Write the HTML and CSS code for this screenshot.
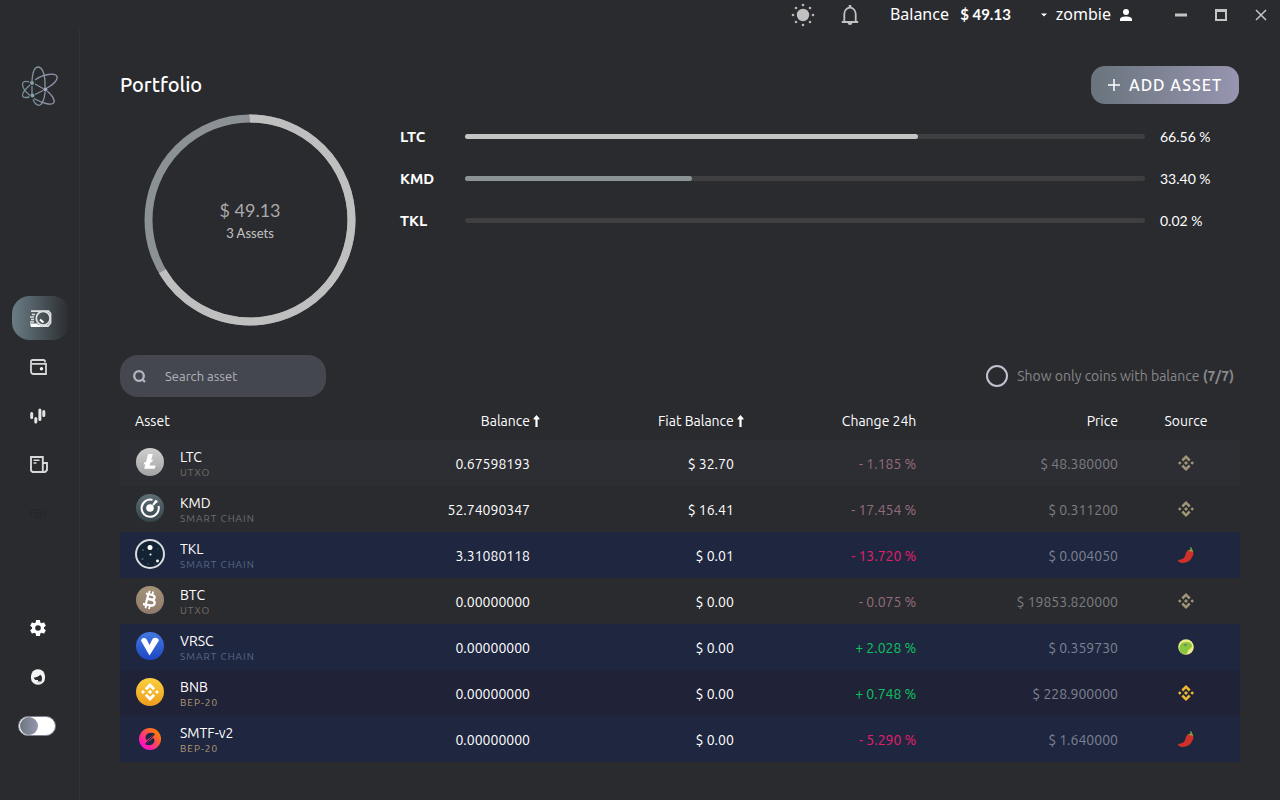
FILE: index.html
```html
<!DOCTYPE html>
<html lang="en">
<head>
<meta charset="utf-8">
<title>Portfolio</title>
<link rel="stylesheet" href="styles.css">
</head>
<body>
<svg class="defs" aria-hidden="true">
  <defs>
    <linearGradient id="g-logo" x1="0" x2="1"><stop offset="0" stop-color="#6f8d92"/><stop offset="1" stop-color="#9694b0"/></linearGradient>
    <linearGradient id="g-ltc" x1="0" x2="0" y1="0" y2="1"><stop offset="0" stop-color="#cfcfcf"/><stop offset="1" stop-color="#a3a3a3"/></linearGradient>
    <linearGradient id="g-kmd" x1="0" x2="0" y1="0" y2="1"><stop offset="0" stop-color="#5f6e74"/><stop offset="1" stop-color="#36454a"/></linearGradient>
    <linearGradient id="g-btc" x1="0" x2="0" y1="0" y2="1"><stop offset="0" stop-color="#a49378"/><stop offset="1" stop-color="#8f7a6c"/></linearGradient>
    <linearGradient id="g-vrsc" x1="0" x2="0" y1="0" y2="1"><stop offset="0" stop-color="#4379e0"/><stop offset="1" stop-color="#1f47c4"/></linearGradient>
    <linearGradient id="g-bnb" x1="0" x2="0" y1="0" y2="1"><stop offset="0" stop-color="#fbd03f"/><stop offset="1" stop-color="#ee9c1c"/></linearGradient>
    <linearGradient id="g-smtf" x1="0" x2="1" y1="1" y2="0"><stop offset="0.1" stop-color="#ff00e0"/><stop offset="0.5" stop-color="#ff4262"/><stop offset="0.85" stop-color="#ff8100"/></linearGradient>
    <symbol id="binance" viewBox="0 0 16 16">
      <path d="M8 0l4.600 4.600-1.800 1.800L8 3.600 5.200 6.400 3.400 4.600zM8 16l4.600-4.600-1.800-1.800L8 12.400 5.200 9.600 3.400 11.400zM8 6l2 2-2 2-2-2zM1.800 6.200L3.600 8 1.800 9.800 0 8zM14.200 6.200L16 8l-1.800 1.800L12.400 8z" fill="currentColor"/>
    </symbol>
    <symbol id="pepper" viewBox="0 0 16 16">
      <path d="M9.200 3.800C10.700 2.200 14 2.400 15 4c1 1.800.4 4.700-1.500 7.200-2 2.900-4.900 4.600-8.200 4.800C2.400 16.100.4 15 .1 14c-.2-.9.8-1.200 2-1.400 2.300-.4 4-1.300 4.900-3.300.8-1.700.7-4 2.200-5.500z" fill="#cf302a"/>
      <path d="M10.300 4.300c.5-1.500 2-1.900 2.300-1.900.2-.8 0-1.300-.8-1.700l.7-.6c1.200.4 1.600 1.400 1.400 2.400.8.4 1.300 1.100 1.200 2.500-.8-1-1.600-1-2.200-.2-.7-.8-1.700-1-2.600-.5z" fill="#7ca93f"/>
    </symbol>
    <symbol id="sort" viewBox="0 0 7 12"><path d="M3.500 0L6.500 3.500v1H4.600V12H2.400V4.500H.5v-1z" fill="currentColor"/></symbol>
  </defs>
</svg>

<div class="app">
  <header class="topbar">
    <button class="icon-btn" aria-label="Theme">
      <svg width="24" height="24" viewBox="0 0 24 24"><circle cx="12" cy="12" r="6.200" fill="#c1c1c1"/><g fill="#b5b5b5"><circle cx="12" cy="2" r="1.300"/><circle cx="12" cy="22" r="1.300"/><circle cx="2" cy="12" r="1.300"/><circle cx="22" cy="12" r="1.300"/><circle cx="5" cy="5" r="1.300"/><circle cx="19" cy="5" r="1.300"/><circle cx="5" cy="19" r="1.300"/><circle cx="19" cy="19" r="1.300"/></g></svg>
    </button>
    <button class="icon-btn" aria-label="Notifications">
      <svg width="18" height="20" viewBox="0 0 18 20"><path d="M3.300 16V9a5.700 6.400 0 0 1 11.400 0v7M.8 17h16.400" fill="none" stroke="#c1c1c1" stroke-width="1.800"/><path d="M7.700 0h2.600v3H7.700zM6.700 18h4.600a2.300 2 0 0 1-4.600 0z" fill="#c1c1c1"/></svg>
    </button>
    <div class="top-balance">Balance <strong>$ 49.13</strong></div>
    <button class="user">
      <svg width="6" height="4" viewBox="0 0 6 4"><path d="M0 .5h6L3 3.500z" fill="#fff"/></svg>
      <span>zombie</span>
      <svg width="12" height="12" viewBox="0 0 12 12"><circle cx="6" cy="3" r="3" fill="#fff"/><path d="M0 12v-1.500C0 8.300 3 7.500 6 7.500s6 .8 6 3V12z" fill="#fff"/></svg>
    </button>
    <div class="window-controls">
      <button aria-label="Minimize"><svg width="12" height="12"><path d="M0 4.500h12v3H0z" fill="#c4c4c4"/></svg></button>
      <button aria-label="Maximize"><svg width="12" height="12"><path d="M1 2h10M1 1v10h10V1z" fill="none" stroke="#c4c4c4" stroke-width="2"/></svg></button>
      <button aria-label="Close"><svg width="12" height="12"><path d="M1 1l10 10M11 1L1 11" stroke="#c4c4c4" stroke-width="1.500"/></svg></button>
    </div>
  </header>

  <aside class="sidebar">
    <svg class="logo" width="38" height="42" viewBox="0 0 38 42" fill="none" stroke="url(#g-logo)" stroke-width="1.300">
      <path d="M11 16C11.500 7 14 2 17.200 2s6 5 6.600 12c.2 3 .3 5 .2 8M14 15C22 9 34 7.500 36 11.500c1.200 4-5 9-10 11.500M26 26c4 3 8 8 7 11.500-2 4-13 0-20-4M12 34.500C14 39 16 40.300 18 40.300c3 0 5.500-6 6.200-14M8.500 17C4 15.500 1.500 17 1.500 19c0 4 3 8 7.500 11.500M9 20c-4 3.500-7.500 7-7.500 10.500 0 2 3 2.500 7 1.500M11 21v8M14 19l8 4.500M14 29.500l8-4"/>
      <g fill="#86a2a8" stroke="none"><circle cx="11" cy="18" r="2"/><circle cx="11.500" cy="30.500" r="2"/><circle cx="24.300" cy="24.300" r="2" fill="#a9abc1"/></g>
    </svg>
    <nav class="nav">
      <a class="nav-item active" href="#portfolio" aria-label="Portfolio"><svg width="22" height="17" viewBox="0 0 22 17"><g fill="none" stroke="#dcdfe0" stroke-width="1.800"><circle cx="13.200" cy="8.300" r="6.900"/><path d="M1 1.200h17.500l2 2.300v9.500l-2.500 3H1"/><path d="M2 4.500h3M0 7h4M1 9.500h3M0 12h4" stroke-width="1.300"/></g><path d="M10 9.500l3.500 3" stroke="#fff" stroke-width="2.200"/><path d="M0 13.500h7l3 2.500v1H1z" fill="#fff"/></svg></a>
      <a class="nav-item" href="#wallet" aria-label="Wallet"><svg width="17" height="16" viewBox="0 0 17 16"><path d="M15 3.500v-1A1.500 1.500 0 0 0 13.500 1h-11A1.500 1.500 0 0 0 1 2.500v10A2.500 2.500 0 0 0 3.500 15H16V4.800H2" fill="none" stroke="#d6d8d9" stroke-width="1.800"/><circle cx="11.500" cy="9.700" r="1.700" fill="#f4f4f4"/></svg></a>
      <a class="nav-item" href="#dex" aria-label="DEX"><svg width="16" height="16" viewBox="0 0 16 16"><g stroke="#e2e4e5" stroke-width="3" stroke-linecap="round"><path d="M1.700 5.500v4M5.800 10.500v3.500M9.900 2v9.500M13.800 3.500v4"/></g></svg></a>
      <a class="nav-item" href="#addresses" aria-label="Address book"><svg width="18" height="17" viewBox="0 0 18 17"><path d="M12.800 16V1H1v13.500L2.500 16H15l2-2V7h-4" fill="none" stroke="#d6d8d9" stroke-width="1.900"/><path d="M3.500 4.200h6M3.500 7h3" stroke="#d6d8d9" stroke-width="1.500"/></svg></a>
      <a class="nav-item" href="#fiat" aria-label="Fiat"><svg width="16" height="9" viewBox="0 0 16 9"><path d="M1 1v7M15 1v7M4 1h8M4 8h8M3 3q5 3 10 0M3 6q5-3 10 0" fill="none" stroke="#242527"/></svg></a>
    </nav>
    <div class="nav nav-bottom">
      <a class="nav-item" href="#settings" aria-label="Settings"><svg width="16" height="16" viewBox="2 2 20 20"><path fill="#fff" d="M19.430 12.980c.04-.32.070-.64.070-.98s-.03-.66-.07-.98l2.110-1.650c.19-.15.240-.42.120-.64l-2-3.460c-.12-.22-.39-.3-.61-.22l-2.490 1c-.52-.4-1.080-.73-1.690-.98l-.38-2.650A.49.490 0 0 0 14 2h-4c-.25 0-.46.180-.49.420l-.38 2.650c-.61.250-1.170.590-1.690.980l-2.490-1c-.23-.09-.49 0-.61.220l-2 3.460c-.13.220-.07.490.12.640l2.110 1.650c-.04.320-.07.650-.07.980s.03.660.07.980l-2.110 1.650c-.19.150-.24.420-.12.640l2 3.460c.12.220.39.300.61.220l2.490-1c.52.400 1.080.730 1.690.980l.38 2.650c.03.240.24.420.49.420h4c.25 0 .46-.18.490-.42l.38-2.650c.61-.25 1.170-.59 1.690-.98l2.490 1c.23.090.49 0 .61-.22l2-3.460c.12-.22.070-.49-.12-.64zM12 15.500a3.500 3.500 0 1 1 0-7 3.500 3.500 0 0 1 0 7z"/></svg></a>
      <a class="nav-item" href="#support" aria-label="Support"><svg width="16" height="16" viewBox="0 0 16 16"><rect x="1" y="0.300" width="14" height="15.400" rx="6.800" fill="#f4f4f4"/><path d="M4 8.500c2.500-.2 4.500-1 6.500-2.700.8 1.200 1.300 1.700 1.500 2.700 0 1.500-.1 2.500-.5 3.500H8v-1H5.500C4.500 10.500 4 9.700 4 8.500z" fill="#2a2b2f"/><path d="M8 12h4l-1 1.500H7z" fill="#a7a8aa"/></svg></a>
      <label class="nav-item toggle"><input type="checkbox" aria-label="Dark mode"></label>
    </div>
  </aside>

  <main class="main">
    <div class="title-row">
      <h1>Portfolio</h1>
      <button class="add"><svg width="12" height="12"><path d="M6 0v12M0 6h12" stroke="#fff" stroke-width="1.500"/></svg>ADD ASSET</button>
    </div>

    <section class="overview">
      <div class="donut">
        <svg width="212" height="212" viewBox="0 0 212 212" fill="none" stroke-width="8">
          <g transform="rotate(-90 106 106)">
            <circle cx="106" cy="106" r="101.500" stroke="#8b9194"/>
            <circle cx="106" cy="106" r="101.500" stroke="#bfbfbf" pathLength="100" stroke-dasharray="66.560 33.440"/>
          </g>
        </svg>
        <div class="donut-text"><span class="total">$ 49.13</span><span class="count">3 Assets</span></div>
      </div>
      <ul class="shares">
        <li><b>LTC</b><span class="bar"><span class="fill" style="width:66.56%"></span></span><span>66.56 %</span></li>
        <li><b>KMD</b><span class="bar"><span class="fill kmd" style="width:33.4%"></span></span><span>33.40 %</span></li>
        <li><b>TKL</b><span class="bar"><span class="fill" style="width:0"></span></span><span>0.02 %</span></li>
      </ul>
    </section>

    <div class="toolbar">
      <label class="search">
        <svg width="13" height="13" viewBox="0 0 13 13" fill="none" stroke="#b3b6c4" stroke-width="2.300"><circle cx="6" cy="6" r="4.800"/><path d="M9 9l3 3"/></svg>
        <input type="text" placeholder="Search asset" aria-label="Search asset">
      </label>
      <label class="only"><input type="checkbox"><span>Show only coins with balance <b>(7/7)</b></span></label>
    </div>

    <table class="assets">
      <colgroup><col class="c-asset"><col class="c-balance"><col class="c-fiat"><col class="c-change"><col class="c-price"><col class="c-source"></colgroup>
      <thead><tr>
        <th class="asset-head">Asset</th>
        <th class="sorted">Balance<svg width="7" height="12"><use href="#sort"/></svg></th>
        <th class="sorted">Fiat Balance<svg width="7" height="12"><use href="#sort"/></svg></th>
        <th>Change 24h</th><th>Price</th><th class="source">Source</th>
      </tr></thead>
      <tbody>
        <tr class="alt">
          <td class="asset"><div class="coin"><svg width="30" height="30" viewBox="0 0 30 30"><circle cx="15" cy="15" r="14" fill="url(#g-ltc)"/><path d="M13 7h4.800l-1.700 6.200 1.900-.8-.7 2.300-1.900.8-.8 3h6l-.9 3.300H9.200l1.200-4.700-1.700.7.6-2.300 1.800-.7z" fill="#fff"/></svg><div><span class="name">LTC</span><span class="kind warm">UTXO</span></div></div></td>
          <td>0.67598193</td><td>$ 32.70</td><td class="down dim">- 1.185 %</td><td class="price dim">$ 48.380000</td>
          <td class="source"><svg class="muted" width="16" height="16"><use href="#binance"/></svg></td>
        </tr>
        <tr>
          <td class="asset"><div class="coin"><svg width="30" height="30" viewBox="0 0 30 30"><circle cx="15" cy="15" r="14" fill="url(#g-kmd)"/><path d="M17.500 6.900A8.600 8.600 0 1 0 23.500 13M18 12l3-3.500" fill="none" stroke="#fff" stroke-width="2"/><circle cx="15" cy="15" r="3.800" fill="#fff"/><circle cx="21" cy="8.500" r="1.600" fill="#fff"/></svg><div><span class="name">KMD</span><span class="kind">SMART CHAIN</span></div></div></td>
          <td>52.74090347</td><td>$ 16.41</td><td class="down dim">- 17.454 %</td><td class="price dim">$ 0.311200</td>
          <td class="source"><svg class="muted" width="16" height="16"><use href="#binance"/></svg></td>
        </tr>
        <tr class="blue">
          <td class="asset"><div class="coin"><svg width="30" height="30" viewBox="0 0 30 30"><circle cx="15" cy="15" r="14" fill="#142334" stroke="#dadddf" stroke-width="2"/><g fill="#fff"><circle cx="15" cy="8.500" r="2.500"/><circle cx="15.500" cy="15.500" r="1"/><circle cx="22.500" cy="22" r="1.400"/></g><g fill="#4d6878"><circle cx="8" cy="11" r=".9"/><circle cx="7.500" cy="20" r="1"/><circle cx="23" cy="10" r=".6"/><circle cx="13" cy="25" r=".7"/><circle cx="20" cy="25" r=".6"/></g></svg><div><span class="name">TKL</span><span class="kind">SMART CHAIN</span></div></div></td>
          <td>3.31080118</td><td>$ 0.01</td><td class="down">- 13.720 %</td><td class="price">$ 0.004050</td>
          <td class="source"><svg width="16" height="16"><use href="#pepper"/></svg></td>
        </tr>
        <tr>
          <td class="asset"><div class="coin"><svg width="30" height="30" viewBox="0 0 30 30"><circle cx="15" cy="15" r="14" fill="url(#g-btc)"/><g fill="none" stroke="#fff" stroke-width="2.300"><path d="M11 8.500l6 1.500c2 .5 3 1.500 2.600 2.900-.4 1.500-1.800 1.900-3.500 1.500l-3.200-.8M13.300 9.500l-3 11.500M12.500 14l4.500 1c2 .5 3 1.700 2.600 3.500-.5 1.900-2.100 2.300-4.200 1.800L8 19"/><path d="M14.700 5.800l-.8 3M18.200 6.600l-.8 3M11.300 20l-.8 3.200M14.800 20.900l-.8 3.200" stroke-width="1.800"/></g></svg><div><span class="name">BTC</span><span class="kind warm">UTXO</span></div></div></td>
          <td>0.00000000</td><td>$ 0.00</td><td class="down dim">- 0.075 %</td><td class="price dim">$ 19853.820000</td>
          <td class="source"><svg class="muted" width="16" height="16"><use href="#binance"/></svg></td>
        </tr>
        <tr class="blue">
          <td class="asset"><div class="coin"><svg width="30" height="30" viewBox="0 0 30 30"><circle cx="15" cy="15" r="14" fill="url(#g-vrsc)"/><path d="M6.400 8.500C8.500 6 11 7 12 9l2.500 5 2.500-5c1.200-2.500 4-3 6.500-.8.4.5.4 1 .1 1.700L14.500 24.500 6.200 10c-.3-.6-.2-1.100.2-1.500z" fill="#fff"/></svg><div><span class="name">VRSC</span><span class="kind">SMART CHAIN</span></div></div></td>
          <td>0.00000000</td><td>$ 0.00</td><td class="up">+ 2.028 %</td><td class="price">$ 0.359730</td>
          <td class="source"><svg width="16" height="16" viewBox="0 0 16 16"><circle cx="8" cy="8" r="7.800" fill="#eceb88"/><path d="M1.500 11C1 6 3.500 3 8 3c4-.3 6 1.500 6 4-.5 3-3.500 3-4 5s-1 3-3 3.200C4 15 2 13.500 1.500 11z" fill="#8ac63f"/><path d="M5.500 5l3.500.2L8.300 7.300 6.300 6.500z" fill="#70806f"/></svg></td>
        </tr>
        <tr class="violet">
          <td class="asset"><div class="coin"><svg width="30" height="30" viewBox="0 0 30 30"><circle cx="15" cy="15" r="14" fill="url(#g-bnb)"/><svg x="6" y="6" width="18" height="18" color="#fff"><use href="#binance"/></svg></svg><div><span class="name">BNB</span><span class="kind gold">BEP-20</span></div></div></td>
          <td>0.00000000</td><td>$ 0.00</td><td class="up">+ 0.748 %</td><td class="price">$ 228.900000</td>
          <td class="source"><svg class="bright" width="16" height="16"><use href="#binance"/></svg></td>
        </tr>
        <tr class="blue">
          <td class="asset"><div class="coin"><svg width="30" height="30" viewBox="0 0 30 30"><circle cx="15" cy="16" r="11" fill="url(#g-smtf)"/><path d="M19.500 10.500C16 9 11 10 10.500 14c0 1.500.5 2.500 1.300 3.300zM10.500 21.500c3.500 1.500 8.500.5 9-3.500 0-1.500-.5-2.500-1.300-3.300z" fill="#222646"/><path d="M19.500 10.800L10.500 21.200" stroke="#222646" stroke-width="1.200"/></svg><div><span class="name">SMTF-v2</span><span class="kind gold">BEP-20</span></div></div></td>
          <td>0.00000000</td><td>$ 0.00</td><td class="down">- 5.290 %</td><td class="price">$ 1.640000</td>
          <td class="source"><svg width="16" height="16"><use href="#pepper"/></svg></td>
        </tr>
      </tbody>
    </table>
  </main>
</div>
</body>
</html>
```
FILE: styles.css
```css
* { box-sizing: border-box; }
body {
  margin: 0;
  background: #2a2b2f;
  color: #fff;
  font: 14px/20px "Ubuntu", "Noto Sans", sans-serif;
}
button {
  border: 0;
  padding: 0;
  background: none;
  color: inherit;
  font: inherit;
  cursor: pointer;
}
svg { display: block; flex: none; }
.defs { position: absolute; width: 0; height: 0; }

.app {
  display: grid;
  grid-template: 30px 1fr / 80px 1fr;
  min-height: 100vh;
}

/* Title bar */
.topbar {
  grid-column: 1 / -1;
  display: flex;
  align-items: center;
  justify-content: flex-end;
  font-size: 16px;
}
.icon-btn { margin-right: 26px; }
.icon-btn + .icon-btn { margin-right: 31px; }
.top-balance {
  padding-bottom: 2px;
  font-family: "Noto Sans", sans-serif;
}
.top-balance strong {
  margin-left: 7px;
  font-family: Lato, sans-serif;
  font-size: 15px;
}
.user {
  display: flex;
  align-items: center;
  gap: 9px;
  margin: 0 28px 0 30px;
  font-family: "Noto Sans", sans-serif;
}
.user span { padding-bottom: 2px; }
.window-controls { display: flex; }
.window-controls button {
  display: flex;
  align-items: center;
  justify-content: center;
  width: 40px;
  height: 30px;
  padding-left: 2px;
}

/* Sidebar */
.sidebar {
  display: flex;
  flex-direction: column;
  padding: 35px 0 50px;
  border-right: 1px solid #333438;
}
.logo { margin-left: 21px; }
.nav { margin-top: 186px; }
.nav-bottom { margin-top: auto; }
.nav-item {
  display: flex;
  align-items: center;
  height: 49px;
  padding-left: 30px;
}
.nav-item.active {
  height: 44px;
  margin: 3px 9px 2px 12px;
  padding-left: 18px;
  border-radius: 18px;
  background: linear-gradient(90deg, #6a7d85, #2a2b2f);
}
.nav-item.toggle { padding-left: 18px; }
.toggle input {
  appearance: none;
  display: flex;
  align-items: center;
  width: 38px;
  height: 20px;
  margin: 0;
  padding: 1px;
  border: 1px solid #7d8190;
  border-radius: 10px;
  background: #fff;
}
.toggle input::before {
  content: "";
  width: 18px;
  height: 18px;
  border-radius: 50%;
  background: linear-gradient(90deg, #6b7780, #9795b0);
}
.toggle input:checked { justify-content: flex-end; }

/* Main */
.main { padding: 36px 40px; }
.title-row {
  display: flex;
  align-items: center;
  justify-content: space-between;
}
h1 { margin: 0; font-size: 20px; font-weight: 500; }
.add {
  display: flex;
  align-items: center;
  justify-content: center;
  gap: 9px;
  min-width: 148px;
  height: 38px;
  margin-right: 1px;
  padding: 0 16px;
  border-radius: 14px;
  background: linear-gradient(90deg, #69747d, #9795b0);
  font-size: 16px;
  font-weight: 500;
  letter-spacing: 1px;
}
.overview {
  display: grid;
  grid-template-columns: 260px 1fr;
  gap: 20px;
  margin-top: 10px;
}
.donut { display: grid; place-items: center; }
.donut > * { grid-area: 1 / 1; }
.donut-text { text-align: center; font-family: Lato, sans-serif; }
.donut-text span { display: block; }
.total { color: #a9a9a9; font-size: 18px; line-height: 26px; }
.count { color: #c4c4c4; font-size: 13px; }
.shares { margin: 2px 0 0; padding: 0; list-style: none; }
.shares li {
  display: grid;
  grid-template-columns: 50px 1fr 80px;
  gap: 15px;
  align-items: center;
  height: 42px;
  font-family: Lato, sans-serif;
}
.shares b { font-family: "Ubuntu", "Noto Sans", sans-serif; font-size: 15px; }
.bar { height: 5px; margin-bottom: 2px; border-radius: 3px; background: #3f3f41; }
.fill { display: block; height: 5px; border-radius: 3px; background: #c4c4c4; }
.fill.kmd { background: #8b9396; }

.toolbar {
  display: flex;
  align-items: center;
  justify-content: space-between;
  margin-top: 29px;
}
.search {
  display: flex;
  align-items: center;
  gap: 19px;
  width: 206px;
  height: 42px;
  padding: 0 13px;
  border-radius: 18px;
  background: #45474f;
}
.search input {
  width: 100%;
  min-width: 0;
  padding: 0;
  border: 0;
  outline: 0;
  background: none;
  color: #fff;
  font: inherit;
  font-size: 13px;
}
.search input::placeholder { color: #b0b2be; opacity: 1; }
.only {
  display: flex;
  align-items: center;
  gap: 9px;
  padding-right: 6px;
  color: #87888a;
}
.only input {
  appearance: none;
  width: 22px;
  height: 22px;
  margin: 0;
  border: 2px solid #c0c2cf;
  border-radius: 50%;
}
.only input:checked { background: #9795b0; }

/* Assets table */
.assets {
  width: 100%;
  margin-top: 5px;
  border-collapse: collapse;
  table-layout: fixed;
}
.c-asset { width: 18%; }
.c-balance { width: 19.5%; }
.c-fiat { width: 18.2%; }
.c-change { width: 16.3%; }
.c-price { width: 18%; }
.c-source { width: 10%; }
.assets th {
  height: 38px;
  padding: 0 10px 0 0;
  font-weight: 400;
  text-align: right;
}
.assets th.sorted { padding-right: 0; }
.sorted svg { display: inline-block; margin-left: 3px; vertical-align: -1px; }
.assets th.asset-head { padding-left: 15px; text-align: left; }
.assets td { height: 46px; padding: 2px 10px 0 0; text-align: right; }
.assets td.asset { padding: 0; }
.assets .source { padding: 0 0 0 4px; text-align: center; }
.source svg { margin: 0 auto; }
.coin {
  display: flex;
  align-items: center;
  gap: 15px;
  padding-left: 15px;
  text-align: left;
}
.coin > svg { margin-bottom: 2px; }
.coin > div { padding-top: 2px; }
.coin span { display: block; }
.name { line-height: 18px; }
.kind { color: #6d6e71; font-size: 10px; line-height: 14px; letter-spacing: 1px; }
.kind.warm { color: #766e65; }
.kind.gold { color: #b39d78; }
.alt { background: #2d2e33; }
.blue { background: #1f2640; }
.violet { background: #202238; }
.blue .kind:not(.gold) { color: #586987; }
.up { color: #0fc25f; }
.down { color: #e31f6b; }
.down.dim { color: #956c7c; }
.price { color: #7c8291; }
.price.dim { color: #7c7d82; }
.muted { color: #a19578; }
.bright { color: #f0b92d; }
```
